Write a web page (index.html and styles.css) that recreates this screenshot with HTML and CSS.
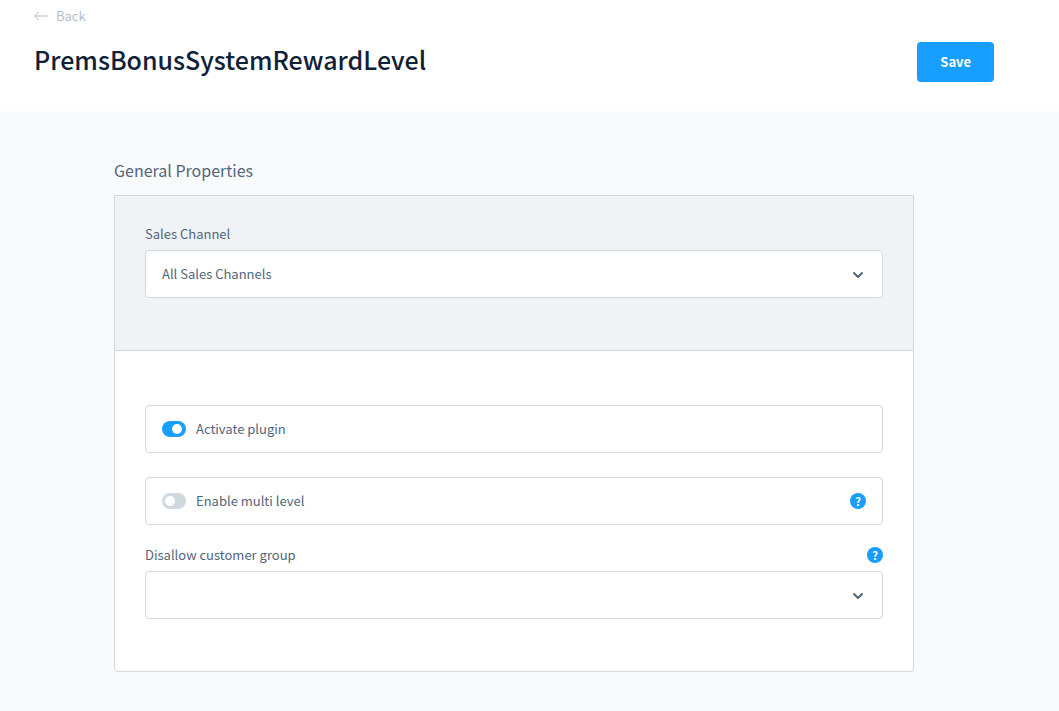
FILE: index.html
```html
<!DOCTYPE html>
<html lang="en">
<head>
<meta charset="utf-8">
<meta name="viewport" content="width=device-width, initial-scale=1">
<title>PremsBonusSystemRewardLevel</title>
<link rel="stylesheet" href="styles.css">
</head>
<body>
<header class="page-header">
  <a class="back-link" href="#">
    <svg class="back-icon" width="14" height="10" viewBox="0 0 14 10" aria-hidden="true"><path d="M13.5 5H1M4.5 1.2L.8 5l3.7 3.8"/></svg>
    Back
  </a>
  <div class="title-row">
    <h1 class="title">PremsBonusSystemRewardLevel</h1>
    <button class="save-button" type="button">Save</button>
  </div>
</header>
<main class="content">
  <form class="settings">
    <h2 class="section-title">General Properties</h2>
    <div class="card">
      <div class="card-channel">
        <label class="label" for="channel">Sales Channel</label>
        <div class="select-box">
          <select class="select" id="channel"><option>All Sales Channels</option></select>
          <svg class="chevron" width="12" height="8" viewBox="0 0 12 8" aria-hidden="true"><path d="M2 2l4 4 4-4"/></svg>
        </div>
      </div>
      <div class="card-body">
        <div class="switch-row">
          <input class="switch" type="checkbox" id="active" checked>
          <label class="switch-label" for="active">Activate plugin</label>
        </div>
        <div class="switch-row">
          <input class="switch" type="checkbox" id="multi">
          <label class="switch-label" for="multi">Enable multi level</label>
          <button class="help" type="button" aria-label="Help for multi level">?</button>
        </div>
        <div class="field">
          <div class="label-row">
            <label class="label" for="group">Disallow customer group</label>
            <button class="help" type="button" aria-label="Help for customer group">?</button>
          </div>
          <div class="select-box">
            <select class="select" id="group"><option></option></select>
            <svg class="chevron" width="12" height="8" viewBox="0 0 12 8" aria-hidden="true"><path d="M2 2l4 4 4-4"/></svg>
          </div>
        </div>
      </div>
    </div>
  </form>
</main>
</body>
</html>
```

FILE: styles.css
```css
* { box-sizing: border-box; }

body {
  margin: 0;
  min-height: 100vh;
  background: #f9fafc;
  color: #52667a;
  font-family: "Noto Sans CJK SC", "Open Sans", sans-serif;
  font-size: 13px;
  line-height: 20px;
}

button, select { font: inherit; }

.page-header {
  padding: 6px 65px 29px 34px;
  background: #fff;
}

.back-link {
  display: inline-flex;
  align-items: center;
  gap: 8px;
  color: #b3bfcc;
  text-decoration: none;
}

.back-icon, .chevron {
  fill: none;
  stroke: currentColor;
  stroke-linecap: round;
  stroke-linejoin: round;
}

.title-row {
  display: flex;
  align-items: flex-start;
  justify-content: space-between;
  margin-top: 16px;
}

.title {
  margin: 0;
  color: #0f2138;
  font-size: 25px;
  font-weight: 500;
  line-height: 34px;
}

.save-button {
  height: 40px;
  padding: 0 23px;
  border: 0;
  border-radius: 4px;
  background: #189eff;
  color: #fff;
  font-weight: 700;
}

.content { padding: 48px 31px 39px 0; }

.settings {
  max-width: 800px;
  margin: 0 auto;
}

.section-title {
  margin: 0 0 14px;
  font-size: 16px;
  font-weight: 400;
  line-height: 22px;
}

.card {
  border: 1px solid #d1d9e0;
  border-radius: 0 0 4px 4px;
  background: #fff;
}

.card-channel {
  padding: 28px 30px 52px;
  border-bottom: 1px solid #d1d9e0;
  background: #f0f2f5;
}

.card-body {
  padding: 54px 30px 52px;
}

.label {
  display: block;
  flex: 1;
}

.select-box {
  position: relative;
  margin-top: 6px;
}

.select {
  display: block;
  width: 100%;
  height: 48px;
  padding: 0 40px 0 16px;
  border: 1px solid #d1d9e0;
  border-radius: 4px;
  appearance: none;
  background: #fff;
  color: inherit;
}

.chevron {
  position: absolute;
  top: 21px;
  right: 19px;
  color: #52667a;
  stroke-width: 2;
  pointer-events: none;
}

.switch-row {
  display: flex;
  align-items: center;
  gap: 10px;
  height: 48px;
  padding: 0 16px;
  border: 1px solid #d1d9e0;
  border-radius: 4px;
}

.switch-row + .switch-row { margin-top: 24px; }

.field { margin-top: 20px; }

.switch {
  display: flex;
  align-items: center;
  width: 24px;
  height: 16px;
  margin: 0;
  padding: 0 4px 0 3px;
  border-radius: 8px;
  appearance: none;
  background: #d1d9e0;
}

.switch::before {
  content: "";
  width: 10px;
  height: 10px;
  border-radius: 50%;
  background: #fff;
}

.switch:checked {
  justify-content: flex-end;
  background: #189eff;
}

.switch-label { flex: 1; }

.label-row {
  display: flex;
  align-items: center;
}

.help {
  width: 16px;
  height: 16px;
  padding: 0;
  border: 0;
  border-radius: 50%;
  background: #189eff;
  color: #fff;
  font-size: 11px;
  font-weight: 700;
  line-height: 16px;
  text-align: center;
}
```
